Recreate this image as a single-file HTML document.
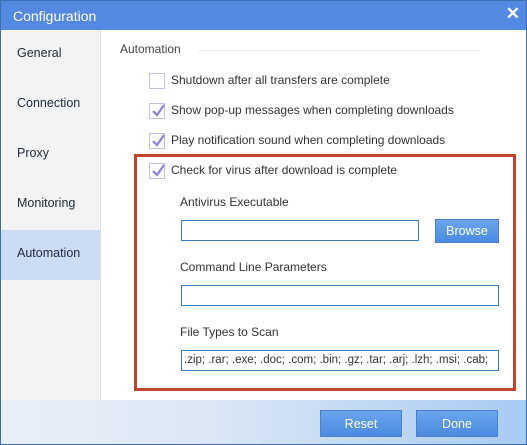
<!DOCTYPE html>
<html><head><style>
*{margin:0;padding:0;box-sizing:border-box}
body{width:527px;height:445px;overflow:hidden;font-family:"Liberation Sans",sans-serif;font-size:12px;color:#222;background:#fff;position:relative}
.frame{position:absolute;left:0;top:0;width:527px;height:445px;border:1px solid #3f6db5;pointer-events:none;z-index:5}
.title{position:absolute;left:0;top:0;width:527px;height:30px;background:#5489e2;color:#fff;font-size:14px;padding:8px 0 0 13px}
.close{position:absolute;right:7px;top:4px;color:#fff;font-size:17px;font-weight:bold}
.side{position:absolute;left:0;top:30px;width:101px;height:370px;background:#f3f3f3;border-right:1px solid #ddd}
.side div{height:50px;padding:16px 0 0 17px;font-size:12.5px;color:#1e2a3a}
.side .sel{background:#cddcf5}
.abs{position:absolute}
.cb{position:absolute;left:149px;width:16px;height:16px;border:1px solid #c4bdea;background:#fff}
.cb svg{position:absolute;left:1px;top:0}
.lbl{position:absolute;left:171px;font-size:12px;color:#333}
.inp{position:absolute;border:1px solid #3b7ec4;background:#fff;height:21px;font-size:11.5px;padding:3px 0 0 2px;color:#333}
.btn{position:absolute;background:linear-gradient(#6aa6ec,#4a8ae0);border:1px solid #4a80cf;color:#fff;text-align:center;font-size:12.5px}
.foot{position:absolute;left:0;top:400px;width:527px;height:45px;background:linear-gradient(90deg,#e9eff8,#dbe7f5 40%,#a8cbf3)}
</style></head><body>
<div class="title">Configuration<span class="close">✕</span></div>
<div class="side">
<div>General</div><div>Connection</div><div>Proxy</div><div>Monitoring</div><div class="sel">Automation</div>
</div>
<div class="abs" style="left:120px;top:42px;color:#444;font-size:12px">Automation</div>
<div class="abs" style="left:198px;top:50px;width:282px;height:1px;background:#dfe5ef"></div>

<div class="cb" style="top:73px"></div><div class="lbl" style="top:73px">Shutdown after all transfers are complete</div>
<div class="cb" style="top:103px"><svg width="14" height="14"><path d="M2 7 L6 11 L13 1" stroke="#8c7fe0" stroke-width="2.2" fill="none"/></svg></div><div class="lbl" style="top:103px">Show pop-up messages when completing downloads</div>
<div class="cb" style="top:133px"><svg width="14" height="14"><path d="M2 7 L6 11 L13 1" stroke="#8c7fe0" stroke-width="2.2" fill="none"/></svg></div><div class="lbl" style="top:133px">Play notification sound when completing downloads</div>

<div class="abs" style="left:134px;top:154px;width:382px;height:237px;border:3px solid #c0452f"></div>
<div class="cb" style="top:163px"><svg width="14" height="14"><path d="M2 7 L6 11 L13 1" stroke="#8c7fe0" stroke-width="2.2" fill="none"/></svg></div><div class="lbl" style="top:163px">Check for virus after download is complete</div>

<div class="abs" style="left:180px;top:195px;color:#333">Antivirus Executable</div>
<div class="inp" style="left:181px;top:220px;width:238px"></div>
<div class="btn" style="left:435px;top:219px;width:64px;height:24px;padding-top:4px">Browse</div>
<div class="abs" style="left:180px;top:260px;color:#333">Command Line Parameters</div>
<div class="inp" style="left:181px;top:285px;width:318px"></div>
<div class="abs" style="left:180px;top:325px;color:#333">File Types to Scan</div>
<div class="inp" style="left:181px;top:350px;width:318px">.zip; .rar; .exe; .doc; .com; .bin; .gz; .tar; .arj; .lzh; .msi; .cab;</div>

<div class="foot"></div>
<div class="btn" style="left:320px;top:410px;width:82px;height:27px;padding-top:6px">Reset</div>
<div class="btn" style="left:416px;top:410px;width:82px;height:27px;padding-top:6px">Done</div>
<div class="frame"></div>
</body></html>
